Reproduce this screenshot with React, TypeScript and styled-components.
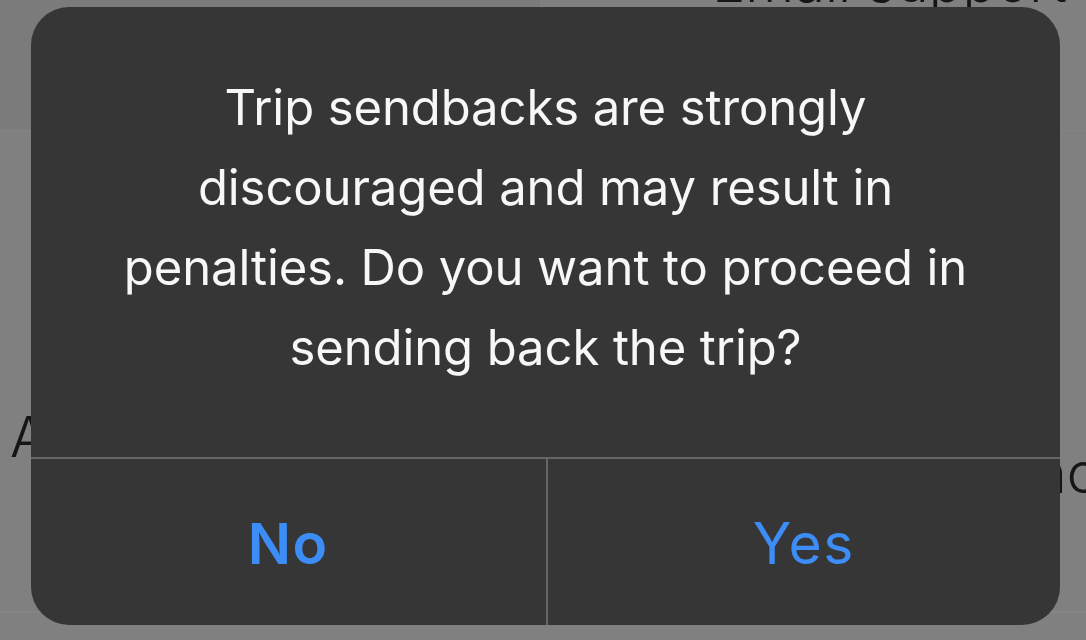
import React from 'react'
import styled, { createGlobalStyle } from 'styled-components'

const GlobalStyle = createGlobalStyle`
  html, body {
    margin: 0;
    padding: 0;
    background: #808080;
    overflow: hidden;
  }
  body {
    font-family: Inter, 'Noto Sans', 'Liberation Sans', sans-serif;
  }
`

const Page = styled.div`
  position: relative;
  width: 1086px;
  height: 640px;
  background: #808080;
  overflow: hidden;
`

const BgTopRow = styled.div`
  display: grid;
  grid-template-columns: 540px 1fr;
  height: 130px;
  border-bottom: 1px solid #858585;
`

const BgCell = styled.div<{ divider?: boolean }>`
  background: ${({ divider }) => (divider ? '#7b7b7b' : 'transparent')};
  overflow: hidden;
`

const BgText = styled.div<{ top: number; left: number }>`
  margin-top: ${({ top }) => top}px;
  margin-left: ${({ left }) => left}px;
  font-size: 56px;
  font-weight: 300;
  color: #151515;
  white-space: nowrap;
`

const BgMiddleRow = styled.div`
  display: flex;
  justify-content: space-between;
  height: 480px;
  border-bottom: 2px solid #858585;
  overflow: hidden;
`

const Dialog = styled.div`
  position: absolute;
  left: 31px;
  top: 7px;
  width: 1029px;
  height: 618px;
  border-radius: 38px;
  background: #363636;
  display: flex;
  flex-direction: column;
  overflow: hidden;
`

const Message = styled.div`
  height: 450px;
  box-sizing: border-box;
  padding: 61px 60px 0;
  text-align: center;
  color: #f7f7f7;
  font-size: 49px;
  line-height: 80px;
  letter-spacing: -0.1px;
`

const Actions = styled.div`
  flex: 1;
  display: grid;
  grid-template-columns: 1fr 1fr;
  border-top: 2px solid #666666;
`

const ActionButton = styled.button<{ primary?: boolean }>`
  border: 0;
  background: transparent;
  color: #3c8df6;
  font-family: inherit;
  font-size: 57px;
  letter-spacing: 1.5px;
  font-weight: ${({ primary }) => (primary ? 600 : 400)};
  display: flex;
  align-items: center;
  justify-content: center;
  padding: 2px 0 0;
  & + & {
    border-left: 2px solid #666666;
  }
`

export default function App() {
  return (
    <>
      <GlobalStyle />
      <Page>
        <BgTopRow>
          <BgCell divider />
          <BgCell>
            <BgText top={-52} left={172}>
              Email support
            </BgText>
          </BgCell>
        </BgTopRow>
        <BgMiddleRow>
          <BgText top={272} left={10}>
            About
          </BgText>
          <BgText top={308} left={0} style={{ marginRight: -12 }}>
            Inc
          </BgText>
        </BgMiddleRow>
        <Dialog>
          <Message>
            Trip sendbacks are strongly
            <br />
            discouraged and may result in
            <br />
            penalties. Do you want to proceed in
            <br />
            sending back the trip?
          </Message>
          <Actions>
            <ActionButton primary>No</ActionButton>
            <ActionButton>Yes</ActionButton>
          </Actions>
        </Dialog>
      </Page>
    </>
  )
}
